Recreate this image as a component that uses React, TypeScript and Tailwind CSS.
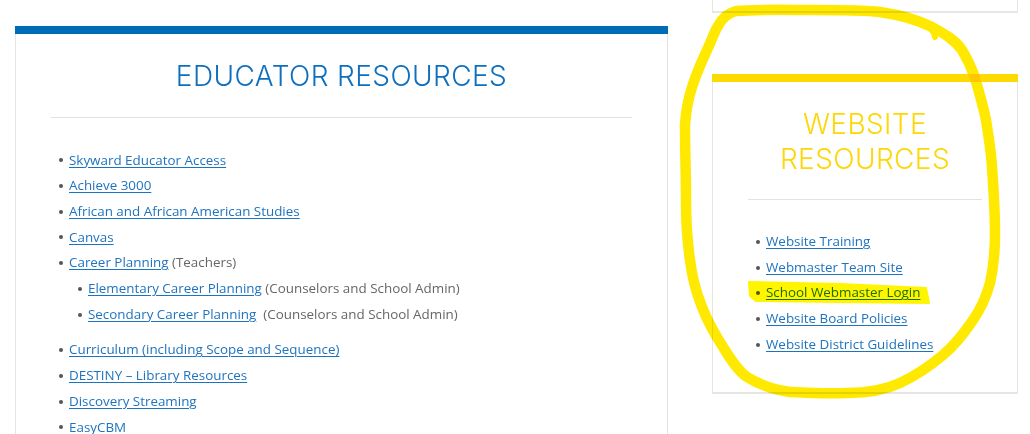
import React from "react";

type Item = { label: string; note?: string; children?: Item[] };

const educator: Item[] = [
  { label: "Skyward Educator Access" },
  { label: "Achieve 3000" },
  { label: "African and African American Studies" },
  { label: "Canvas" },
  {
    label: "Career Planning",
    note: " (Teachers)",
    children: [
      { label: "Elementary Career Planning", note: " (Counselors and School Admin)" },
      { label: "Secondary Career Planning", note: "\u00a0 (Counselors and School Admin)" },
    ],
  },
  { label: "Curriculum (including Scope and Sequence)" },
  { label: "DESTINY \u2013 Library Resources" },
  { label: "Discovery Streaming" },
  { label: "EasyCBM" },
];

const website: Item[] = [
  { label: "Website Training" },
  { label: "Webmaster Team Site" },
  { label: "School Webmaster Login" },
  { label: "Website Board Policies" },
  { label: "Website District Guidelines" },
];

function Dot() {
  return <span className="inline-block w-[4px] h-[4px] rounded-full bg-[#555555] mr-[6px] shrink-0" />;
}

function List({ items, nested = false }: { items: Item[]; nested?: boolean }) {
  return (
    <ul className={nested ? "pl-[19px] mb-[10px]" : "pl-[8px]"}>
      {items.map((it) => (
        <li key={it.label}>
          <div className="flex items-center leading-[25.7px] whitespace-nowrap">
            <Dot />
            <span>
              <a href="#" className="text-[#1e73be] underline underline-offset-[2px] decoration-1">
                {it.label}
              </a>
              {it.note && <span className="text-[#666666]">{it.note}</span>}
            </span>
          </div>
          {it.children && <List items={it.children} nested />}
        </li>
      ))}
    </ul>
  );
}

export default function App() {
  return (
    <div
      className="relative w-[1030px] h-[434px] overflow-hidden bg-white flex gap-[44px] pl-[15px]"
      style={{ fontFamily: '"Open Sans", "Liberation Sans", sans-serif' }}
    >
      {/* Educator card */}
      <div className="w-[653px] mt-[26px] shrink-0">
        <div className="h-[8px] bg-[#006bb6]" />
        <div className="border-x border-b border-[#e4e4e4] px-[35px] h-[500px]">
          <h2
            className="text-center text-[28px] leading-[35px] font-light tracking-[0.4px] text-[#0e6fbe] pt-[25px] pb-[23px]"
            style={{ fontFamily: 'Inter, "Liberation Sans", sans-serif' }}
          >
            EDUCATOR RESOURCES
          </h2>
          <div className="border-t border-[#e2e2e2]" />
          <div className="pt-[29.5px] text-[13.4px]">
            <List items={educator} />
          </div>
        </div>
      </div>

      {/* Right column */}
      <div className="w-[306px] shrink-0">
        <div className="h-[13px] border-x border-b-2 border-[#e6e6e6]" />
        <div className="mt-[61px]">
          <div className="h-[8px] bg-[#fedb00]" />
          <div className="border-x border-b-2 border-[#e6e6e6] px-[35px] pb-[34px]">
            <h2
              className="text-center text-[28px] leading-[35px] font-light tracking-[0.4px] text-[#fdd708] pt-[25px] pb-[22px]"
              style={{ fontFamily: 'Inter, "Liberation Sans", sans-serif' }}
            >
              WEBSITE
              <br />
              RESOURCES
            </h2>
            <div className="border-t border-[#e2e2e2]" />
            <div className="pt-[29px] text-[13.4px]">
              <List items={website} />
            </div>
          </div>
        </div>
      </div>

      {/* Hand-drawn annotation */}
      <svg
        className="absolute inset-0 pointer-events-none mix-blend-multiply"
        width="1030"
        height="434"
        viewBox="0 0 1030 434"
      >
        <path
          d="M 749 282 L 840 284 L 926 288 L 929 303 L 840 302 L 756 301 L 750 296 Z"
          fill="#fff500"
          stroke="#fff500"
          strokeWidth="2"
          strokeLinejoin="round"
        />
        <path
          d="M 736 11 C 760 9, 790 10, 813 10 C 845 10, 862 10, 880 12 C 900 15, 918 20, 932 27 C 945 34, 955 40, 962 50 C 968 60, 971 66, 975 78 C 980 95, 983 105, 986 120 C 989 140, 991 150, 992 167 C 994 195, 995 215, 995 233 C 995 255, 993 270, 990 283 C 986 298, 980 310, 973 320 C 963 335, 955 345, 943 355 C 930 366, 915 376, 900 383 C 885 390, 865 393, 847 393 C 825 394, 808 393, 790 392 C 775 390, 760 385, 747 377 C 737 370, 730 358, 723 347 C 714 333, 707 320, 702 307 C 696 292, 692 277, 690 260 C 687 240, 686 220, 686 200 C 686 175, 685 150, 685 125 C 686 112, 687 106, 689 98 C 692 85, 700 65, 707 50 C 712 40, 714 32, 718 26 C 722 18, 728 13, 736 11 Z"
          fill="none"
          stroke="#ffe900"
          strokeWidth="10.5"
          strokeLinecap="round"
          strokeLinejoin="round"
        />
        <path d="M 925 24 Q 934 30 935 37" fill="none" stroke="#ffe900" strokeWidth="6" strokeLinecap="round" />
      </svg>
    </div>
  );
}
